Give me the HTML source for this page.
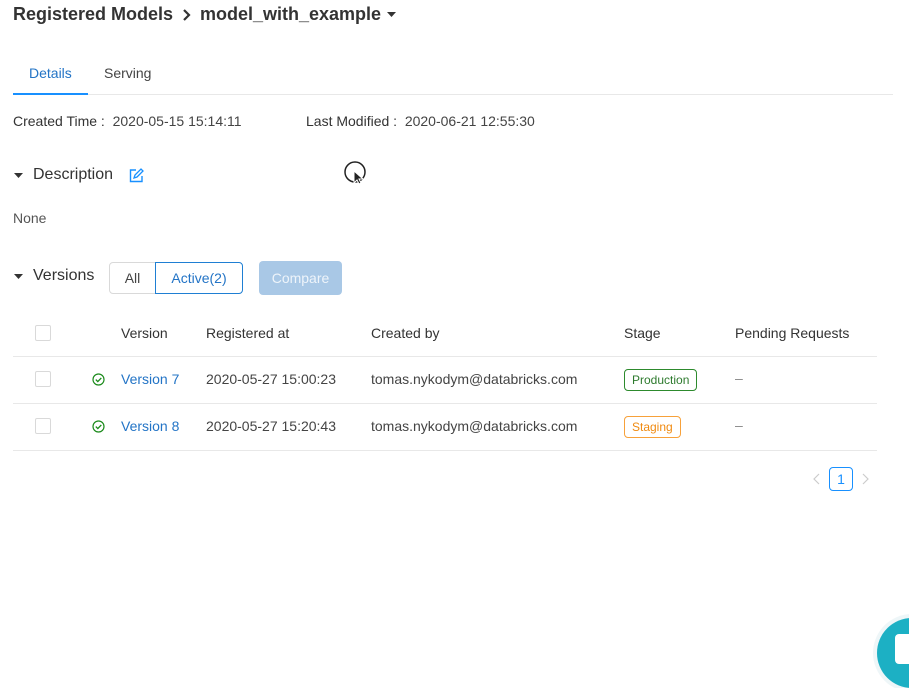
<!DOCTYPE html>
<html><head><meta charset="utf-8"><style>
*{margin:0;padding:0;box-sizing:border-box}
body{width:909px;height:659px;overflow:hidden;background:#fff;font-family:"Liberation Sans",Arial,sans-serif;color:#333;position:relative;font-size:14px}
.a{position:absolute;white-space:nowrap}
.line{position:absolute;height:1px;background:#e8e8e8}
.cb{position:absolute;width:16px;height:16px;border:1px solid #d9d9d9;border-radius:2px;background:#fff}
.blue{color:#2374c6}
.tag{position:absolute;height:22px;border:1px solid;border-radius:4px;font-size:12px;line-height:20px;padding:0 7px}
</style></head><body>
<div class="a" style="left:13px;top:4px;font-size:18px;font-weight:bold;color:#333">Registered Models</div>
<svg class="a" style="left:181px;top:8px" width="12" height="14"><path d="M3 2l5 5-5 5" stroke="#333" stroke-width="2.2" fill="none"/></svg>
<div class="a" style="left:200px;top:4px;font-size:18px;font-weight:bold;color:#333">model_with_example</div>
<svg class="a" style="left:387px;top:12px" width="10" height="6"><path d="M0 0h9l-4.5 5z" fill="#333"/></svg>

<div class="a" style="left:29px;top:65px;color:#2374c6;font-size:14px">Details</div>
<div class="a" style="left:104px;top:65px;color:#444;font-size:14px">Serving</div>
<div class="line" style="left:13px;top:94px;width:880px"></div>
<div class="a" style="left:13px;top:93px;width:75px;height:2px;background:#1890ff"></div>

<div class="a" style="left:13px;top:113px;font-size:14px;color:#333">Created Time :&nbsp; <span style="color:#444">2020-05-15 15:14:11</span></div>
<div class="a" style="left:306px;top:113px;font-size:14px;color:#333">Last Modified :&nbsp; <span style="color:#444">2020-06-21 12:55:30</span></div>

<svg class="a" style="left:14px;top:173px" width="10" height="6"><path d="M0 0h9l-4.5 5z" fill="#333"/></svg>
<div class="a" style="left:33px;top:166px;font-size:16px;color:#333">Description</div>
<svg class="a" style="left:129px;top:168px" width="15" height="15"><path d="M7 2H1.5v11.5H13V8" stroke="#1890ff" stroke-width="1.4" fill="none"/><path d="M5 10l1-3 6-6 2 2-6 6z" stroke="#1890ff" stroke-width="1.3" fill="none"/></svg>
<svg class="a" style="left:344px;top:161px" width="24" height="28"><circle cx="11" cy="11" r="10" stroke="#222" stroke-width="1.5" fill="#fff"/><path d="M10 10v12l3-3 2 4 2-1-2-4h4z" fill="#222" stroke="#fff" stroke-width="1"/></svg>

<div class="a" style="left:13px;top:210px;font-size:14px;color:#555">None</div>

<svg class="a" style="left:14px;top:274px" width="10" height="6"><path d="M0 0h9l-4.5 5z" fill="#333"/></svg>
<div class="a" style="left:33px;top:267px;font-size:16px;color:#333">Versions</div>
<div class="a" style="left:109px;top:262px;width:47px;height:32px;border:1px solid #d9d9d9;border-radius:4px 0 0 4px;text-align:center;line-height:30px;color:#444">All</div>
<div class="a" style="left:155px;top:262px;width:88px;height:32px;border:1px solid #1f7fd3;border-radius:0 4px 4px 0;text-align:center;line-height:30px;color:#2374c6">Active(2)</div>
<div class="a" style="left:259px;top:261px;width:83px;height:34px;background:#a9c8e6;border-radius:4px;text-align:center;line-height:34px;color:#eef4fa">Compare</div>

<div class="cb" style="left:35px;top:325px"></div>
<div class="a" style="left:121px;top:325px">Version</div>
<div class="a" style="left:206px;top:325px">Registered at</div>
<div class="a" style="left:371px;top:325px">Created by</div>
<div class="a" style="left:624px;top:325px">Stage</div>
<div class="a" style="left:735px;top:325px">Pending Requests</div>
<div class="line" style="left:13px;top:356px;width:864px"></div>

<div class="cb" style="left:35px;top:371px"></div>
<svg class="a" style="left:92px;top:373px" width="13" height="13"><circle cx="6.5" cy="6.5" r="5.5" stroke="#1a8a1a" stroke-width="1.2" fill="none"/><path d="M3.8 6.6l2 2 3.5-3.7" stroke="#1a8a1a" stroke-width="1.3" fill="none"/></svg>
<div class="a blue" style="left:121px;top:371px">Version 7</div>
<div class="a" style="left:206px;top:371px;color:#444">2020-05-27 15:00:23</div>
<div class="a" style="left:371px;top:371px;color:#444">tomas.nykodym@databricks.com</div>
<div class="tag" style="left:624px;top:369px;border-color:#2d8a2d;color:#2d7a2d">Production</div>
<div class="a" style="left:735px;top:370px;color:#888">–</div>
<div class="line" style="left:13px;top:403px;width:864px"></div>

<div class="cb" style="left:35px;top:418px"></div>
<svg class="a" style="left:92px;top:420px" width="13" height="13"><circle cx="6.5" cy="6.5" r="5.5" stroke="#1a8a1a" stroke-width="1.2" fill="none"/><path d="M3.8 6.6l2 2 3.5-3.7" stroke="#1a8a1a" stroke-width="1.3" fill="none"/></svg>
<div class="a blue" style="left:121px;top:418px">Version 8</div>
<div class="a" style="left:206px;top:418px;color:#444">2020-05-27 15:20:43</div>
<div class="a" style="left:371px;top:418px;color:#444">tomas.nykodym@databricks.com</div>
<div class="tag" style="left:624px;top:416px;border-color:#f7a13a;color:#f08a10">Staging</div>
<div class="a" style="left:735px;top:417px;color:#888">–</div>
<div class="line" style="left:13px;top:450px;width:864px"></div>

<svg class="a" style="left:812px;top:473px" width="10" height="12"><path d="M7 1L2 6l5 5" stroke="#ccc" stroke-width="1.2" fill="none"/></svg>
<div class="a" style="left:829px;top:467px;width:24px;height:24px;border:1px solid #1890ff;border-radius:4px;text-align:center;line-height:22px;color:#1890ff;font-size:14px">1</div>
<svg class="a" style="left:860px;top:473px" width="10" height="12"><path d="M3 1l5 5-5 5" stroke="#ccc" stroke-width="1.2" fill="none"/></svg>

<div class="a" style="left:877px;top:618px;width:70px;height:70px;border-radius:50%;background:#1cb0c4;box-shadow:0 0 0 4px #eef6f8"></div>
<div class="a" style="left:895px;top:634px;width:20px;height:30px;background:#fff;border-radius:4px"></div>
</body></html>
